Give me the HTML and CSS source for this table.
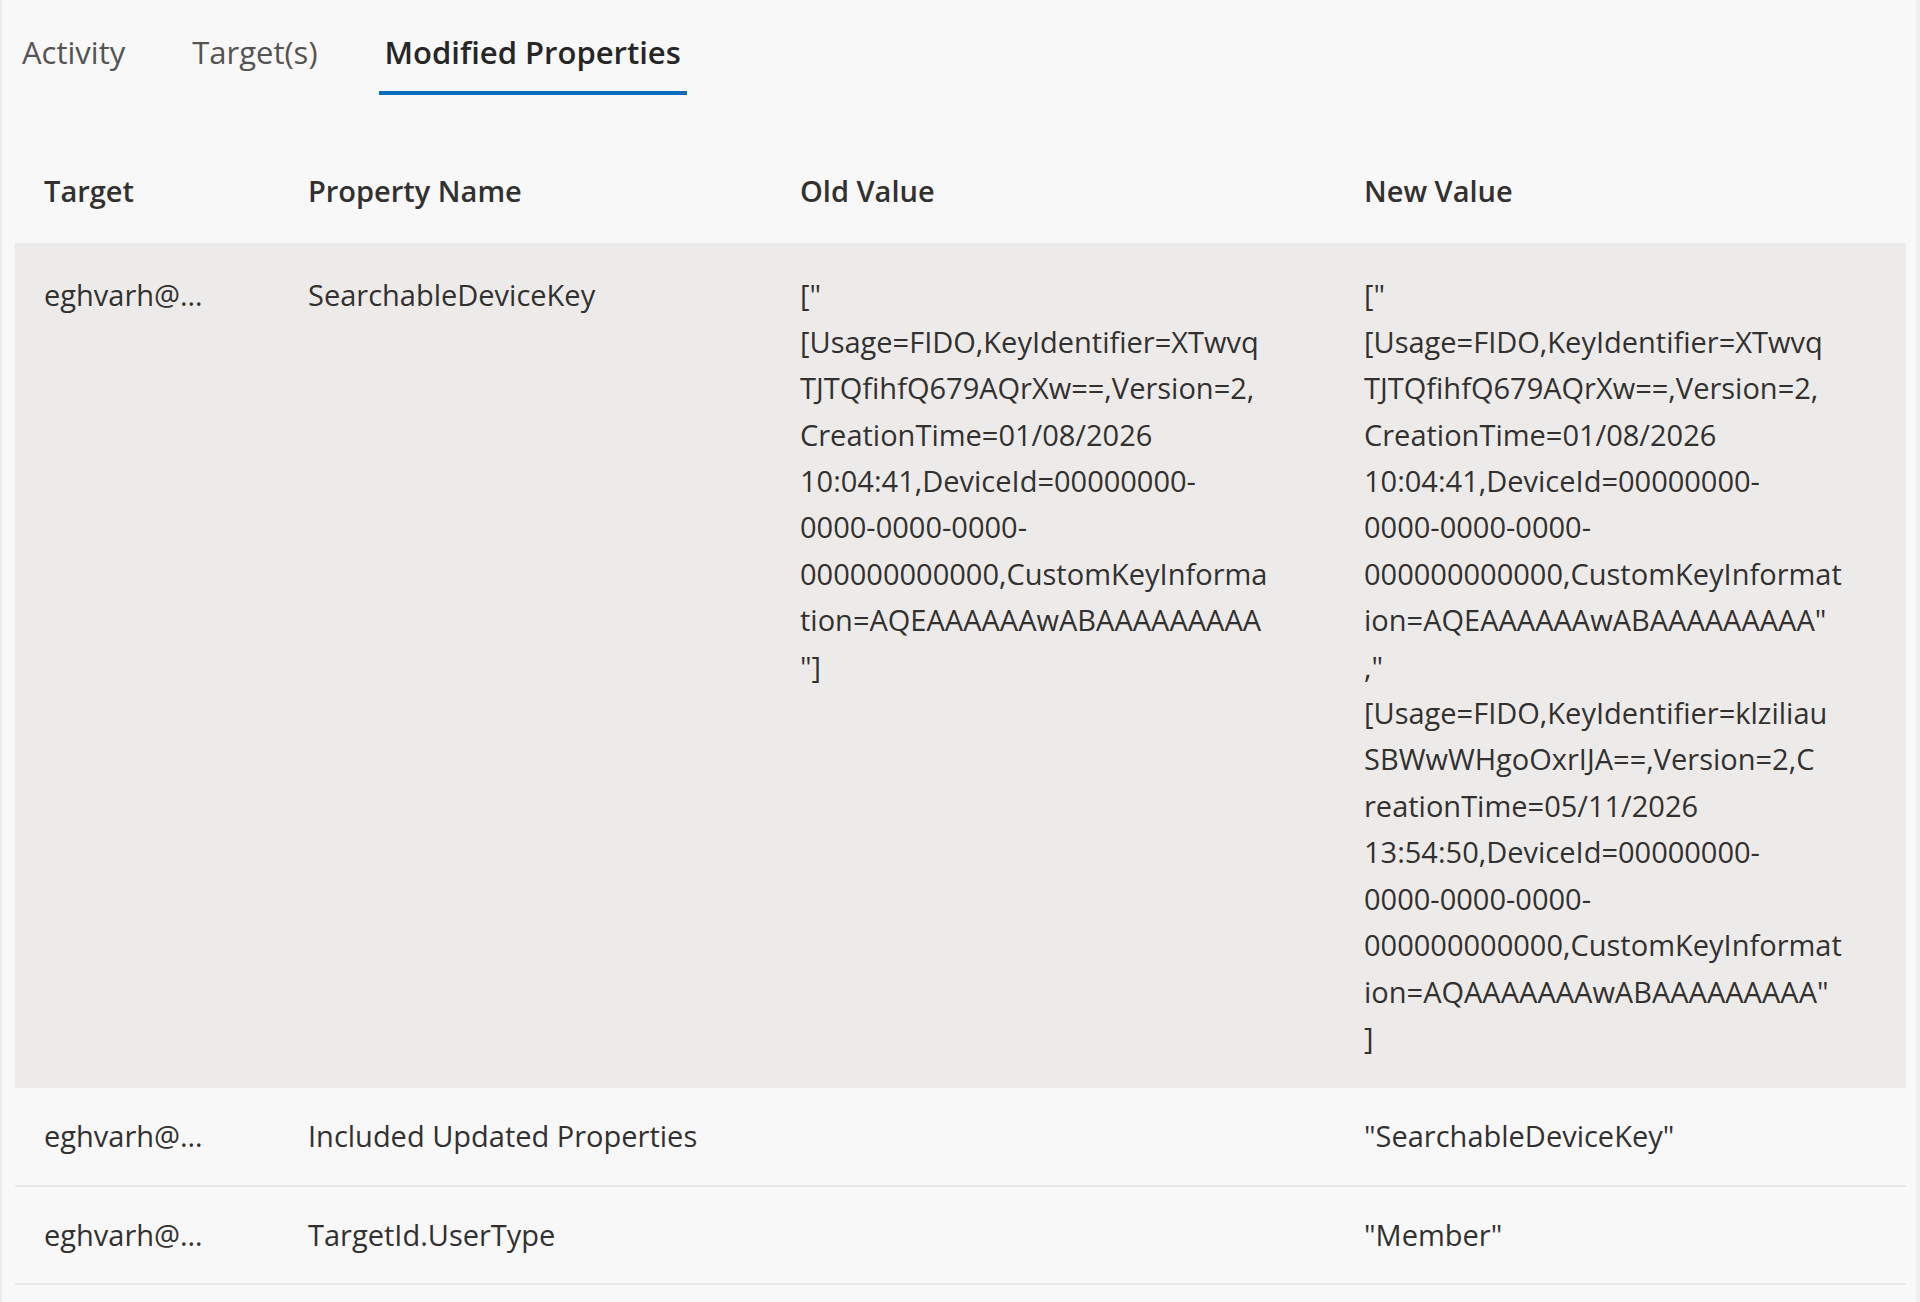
FILE: index.html
```html
<!DOCTYPE html>
<html lang="en">
<head>
<meta charset="utf-8">
<title>Modified Properties</title>
<link rel="stylesheet" href="styles.css">
</head>
<body>
<div class="page">
  <nav class="tabs">
    <div class="tab">Activity</div>
    <div class="tab">Target(s)</div>
    <div class="tab active">Modified Properties</div>
  </nav>
  <div class="list">
    <div class="row head">
      <div class="cell">Target</div>
      <div class="cell">Property Name</div>
      <div class="cell">Old Value</div>
      <div class="cell">New Value</div>
    </div>
    <div class="row sel">
      <div class="cell">eghvarh@…</div>
      <div class="cell">SearchableDeviceKey</div>
      <div class="cell value">
        <div>["</div>
        <div>[Usage=FIDO,KeyIdentifier=XTwvq</div>
        <div>TJTQfihfQ679AQrXw==,Version=2,</div>
        <div>CreationTime=01/08/2026</div>
        <div>10:04:41,DeviceId=00000000-</div>
        <div>0000-0000-0000-</div>
        <div>000000000000,CustomKeyInforma</div>
        <div>tion=AQEAAAAAAwABAAAAAAAAA</div>
        <div>"]</div>
      </div>
      <div class="cell value">
        <div>["</div>
        <div>[Usage=FIDO,KeyIdentifier=XTwvq</div>
        <div>TJTQfihfQ679AQrXw==,Version=2,</div>
        <div>CreationTime=01/08/2026</div>
        <div>10:04:41,DeviceId=00000000-</div>
        <div>0000-0000-0000-</div>
        <div>000000000000,CustomKeyInformat</div>
        <div>ion=AQEAAAAAAwABAAAAAAAAA"</div>
        <div>,"</div>
        <div>[Usage=FIDO,KeyIdentifier=klziliau</div>
        <div>SBWwWHgoOxrIJA==,Version=2,C</div>
        <div>reationTime=05/11/2026</div>
        <div>13:54:50,DeviceId=00000000-</div>
        <div>0000-0000-0000-</div>
        <div>000000000000,CustomKeyInformat</div>
        <div>ion=AQAAAAAAAwABAAAAAAAAA"</div>
        <div>]</div>
      </div>
    </div>
    <div class="row">
      <div class="cell">eghvarh@…</div>
      <div class="cell">Included Updated Properties</div>
      <div class="cell"></div>
      <div class="cell">"SearchableDeviceKey"</div>
    </div>
    <div class="row">
      <div class="cell">eghvarh@…</div>
      <div class="cell">TargetId.UserType</div>
      <div class="cell"></div>
      <div class="cell">"Member"</div>
    </div>
  </div>
</div>
</body>
</html>
```

FILE: styles.css
```css
html, body {
  margin: 0;
  padding: 0;
  background: #f8f8f8;
}

body {
  font-family: "Open Sans", "Noto Sans", "Liberation Sans", sans-serif;
  color: #323130;
}

.page {
  min-height: 100vh;
  box-sizing: border-box;
  border-left: 2px solid #ebebeb;
  border-right: 4px solid #efefef;
  padding: 0 10px 0 13px;
}

.tabs {
  display: flex;
  gap: 55px;
  padding: 31px 0 0 1px;
}

.tab {
  font-size: 31px;
  line-height: 42px;
  padding: 0 6px 18px;
  border-bottom: 4px solid transparent;
  color: #555453;
  white-space: nowrap;
}

.tab.active {
  font-weight: 600;
  color: #262626;
  border-bottom-color: #0f6cbd;
}

.list {
  margin-top: 46px;
}

.row {
  display: grid;
  grid-template-columns: 264px 492px 564px 1fr;
  font-size: 29px;
  line-height: 46.4px;
  padding: 25px 0;
  border-bottom: 2px solid #e9e9e9;
}

.row.head {
  font-weight: 600;
  padding: 27px 0 29px;
  border-bottom: none;
}

.row.sel {
  background: #edebe9;
  padding: 29px 0 27px;
  border-bottom: none;
}

.cell {
  padding-left: 29px;
  white-space: nowrap;
}
```
